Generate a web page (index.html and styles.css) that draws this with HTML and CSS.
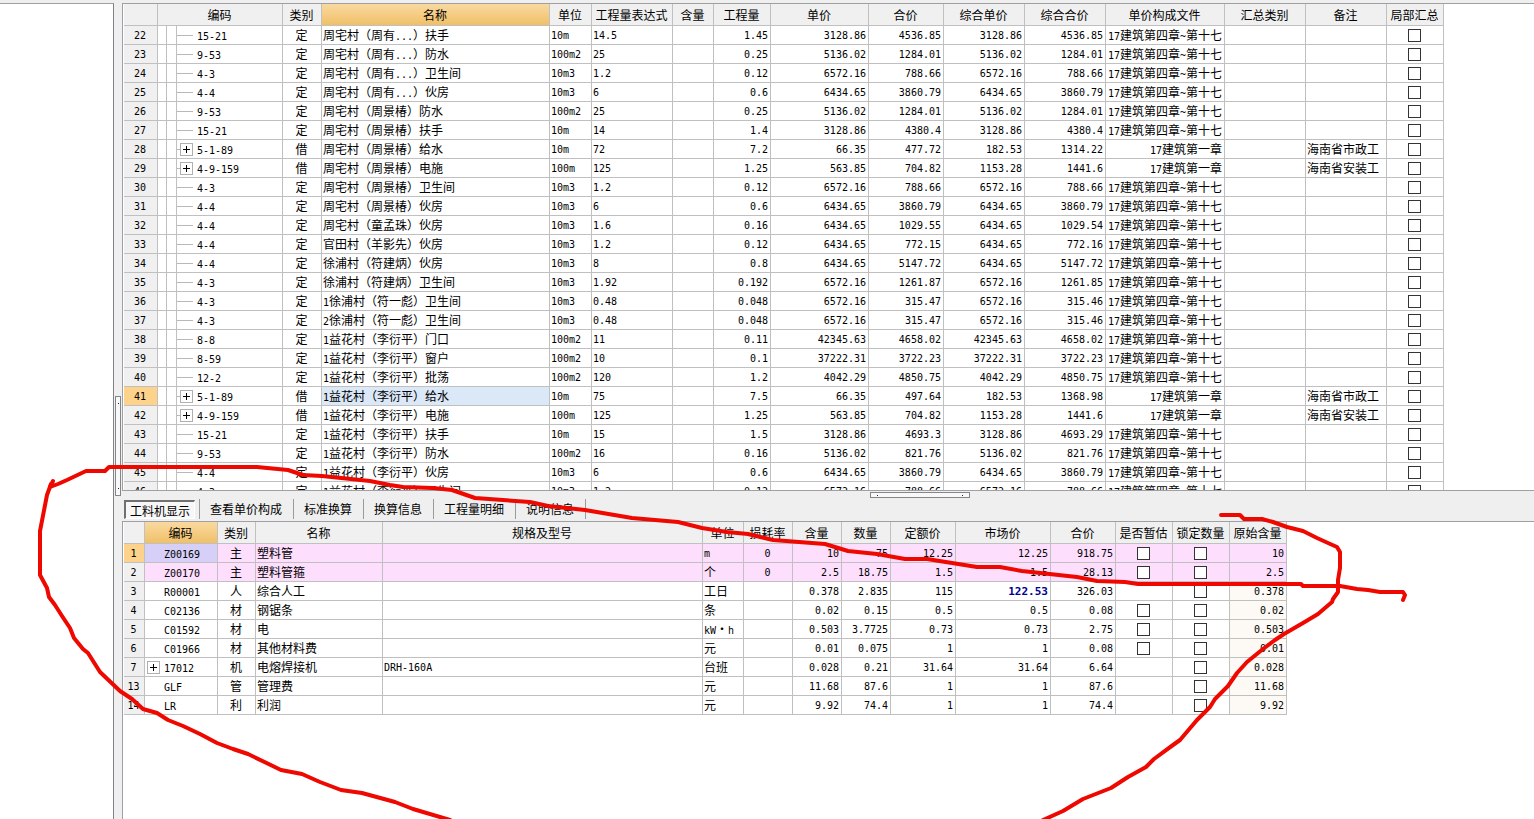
FILE: index.html
```html
<!DOCTYPE html>
<html lang="zh-CN">
<head>
<meta charset="utf-8">
<title>工料机显示</title>
<link rel="stylesheet" href="styles.css">
</head>
<body>
<div class="app">
  <aside class="side"></aside>
  <div class="vsplit">
    <div class="space-before"></div>
    <div class="vhandle"><i></i><i></i></div>
    <div class="space-after"></div>
  </div>
  <main class="main">
    <section class="panel upper">
      <table class="grid" id="items"></table>
    </section>
    <div class="hsplit"><div class="hhandle"><i></i><i></i></div></div>
    <nav class="tabs">
      <button class="tab active">工料机显示</button>
      <button class="tab">查看单价构成</button>
      <button class="tab">标准换算</button>
      <button class="tab">换算信息</button>
      <button class="tab">工程量明细</button>
      <button class="tab">说明信息</button>
    </nav>
    <section class="panel lower">
      <table class="grid" id="resources"></table>
    </section>
  </main>
</div>
<svg class="ink" width="1534" height="819" viewBox="0 0 1534 819" aria-hidden="true">
  <path d="M53 481L50 487L58 484L67 480L86 471L105 471L109 467H257L288 470L303 475L322 476L370 481L390 485L403 487L433 488L452 490L475 498L530 502L548 506L585 510L632 518L678 522L702 528L727 532L748 534L773 540L825 544L848 551L877 554L905 559L927 559L977 567L1000 567L1022 571L1077 577L1097 581L1125 582L1138 584H1301L1303 586L1340 586L1357 589L1368 590L1380 592H1403L1405 595L1403 600"/>
  <path d="M51 484L47 495L40 531V575L47 588L49 597L55 605L62 616L70 628L74 638L83 649L88 653L100 672L120 691L132 699L143 709L157 713L168 720L183 726L200 734L217 743L233 749L248 754L281 770L302 774L320 782L341 790L362 793L395 802L413 809L450 820"/>
  <path d="M1221 515H1240L1244 519H1262L1273 522L1287 527L1303 531L1317 538L1328 543L1337 547L1340 552V568L1338 580L1338 592L1333 599L1332 602L1318 614L1303 623L1284 634L1275 640L1263 649L1247 662L1237 673L1228 686L1215 699L1210 707L1197 720L1180 740L1173 745L1154 759L1146 767L1128 777L1111 788L1083 799L1063 811L1043 820"/>
</svg>
<script src="app.js"></script>
</body>
</html>
```

FILE: styles.css
```css
* { box-sizing: border-box; }

body {
  margin: 0;
  background: #efefef;
  color: #000;
  font: 12px "Noto Sans CJK SC", sans-serif;
  overflow: hidden;
}

.app {
  display: flex;
  height: 100vh;
}

.side {
  flex: none;
  width: 114px;
  margin-top: 3px;
  background: #fff;
  border-top: 1px solid #a0a0a0;
  border-right: 1px solid #808488;
}

.vsplit {
  flex: none;
  display: flex;
  flex-direction: column;
  align-items: center;
  width: 8px;
}
.space-before { flex: 396; }
.space-after { flex: 323; }

.vhandle,
.hhandle {
  display: flex;
  justify-content: space-between;
  border: 1px solid #83878b;
  background: #f8f8f8;
}
.vhandle {
  flex-direction: column;
  align-items: center;
  width: 6px;
  height: 100px;
  padding: 6px 0;
}
.hhandle {
  align-items: center;
  width: 100px;
  height: 6px;
  margin-left: 53%;
  padding: 0 6px;
}
.vhandle i,
.hhandle i {
  width: 1px;
  height: 1px;
  background: #222;
}

.main {
  flex: 1;
  min-width: 0;
  display: flex;
  flex-direction: column;
  padding-top: 3px;
}

.panel {
  overflow: hidden;
  padding-left: 1px;
  background: #fff;
  border: 1px solid #a0a0a4;
  border-right: 0;
}
.upper { flex: 488; min-height: 0; }
.lower { flex: 298; min-height: 0; border-bottom: 0; }

.hsplit {
  flex: none;
  height: 8px;
  padding-top: 1px;
}

.tabs {
  flex: none;
  display: flex;
  height: 22px;
  padding: 0 0 2px 2px;
}
.tab {
  padding: 0 11px 0 10px;
  border: 0;
  border-right: 1px solid #9a9a9a;
  background: none;
  color: #000;
  font: inherit;
  line-height: 18px;
}
.tab.active {
  margin: 1px 4px 0 0;
  padding: 0 4px;
  border: 1px solid #fff;
  border-top: 2px solid #707070;
  border-left: 2px solid #707070;
  background: #f7f7f7;
}
.tab.active + .tab { border-left: 1px solid #9a9a9a; }

.grid {
  table-layout: fixed;
  border-spacing: 0;
}
.grid th,
.grid td {
  overflow: hidden;
  padding: 0 2px 0 1px;
  border: 0 solid #c0c0c0;
  border-width: 0 1px 1px 0;
  line-height: 18px;
  text-align: left;
  white-space: nowrap;
  font-weight: normal;
}
.grid thead th {
  padding: 0 1px 0 0;
  background: #f0f0f0;
  line-height: 21px;
  text-align: center;
}
.grid thead th.current { background: linear-gradient(#f9d9a0, #f0c068); }
.grid tbody th {
  background: #f0f0f0;
  text-align: center;
}
.grid tbody th.current { background: #fdd28a; }

.grid .num { text-align: right; }
.grid .mid { text-align: center; }
.grid .tree-cell { padding: 0; }

.lat,
.grid .lat {
  font-family: "DejaVu Sans Mono", monospace;
  font-size: 10px;
}
.grid td.lat,
.grid tbody th.lat {
  padding-top: 2px;
  line-height: 16px;
}
span.lat { line-height: 0; }

.grid .selected { background: #dae8f7; }
.grid .main-material td { background: #fddffd; }
.grid .main-material td.picked { background: #d6d0f8; }
.grid .origin { background: #fdfaf5; }
.grid .edited {
  color: #000090;
  font-size: 11px;
  font-weight: bold;
}

.tree {
  display: flex;
  align-items: center;
  height: 18px;
}
.tree .lat { padding-top: 3px; }
.guide {
  width: 9px;
  height: 18px;
  border-right: 1px solid #c0c0c0;
}
.guide + .guide { width: 10px; }
.branch {
  width: 16px;
  height: 1px;
  margin-right: 4px;
  background: #b8b8b8;
}
.branch.stub {
  width: 3px;
  margin-right: 0;
}
.expand,
.no-expand {
  width: 13px;
  height: 13px;
  margin-right: 4px;
}
.expand {
  padding: 0;
  border: 1px solid #b0b0b0;
  background: #fff;
}
.expand svg { display: block; }
.flat { padding-left: 2px; }

.check {
  appearance: none;
  display: block;
  width: 13px;
  height: 13px;
  margin: 1px auto 0;
  border: 1px solid #333;
  background: #fff;
}

.ink {
  position: absolute;
  top: 0;
  left: 0;
  pointer-events: none;
  fill: none;
  stroke: #ee0800;
  stroke-width: 4;
  stroke-linecap: round;
  stroke-linejoin: round;
}
```

FILE: app.js
```js
const CHAPTERS = '17建筑第四章~第十七';
const items = `22|15-21|定|周宅村（周有...）扶手|10m|14.5|1.45|3128.86|4536.85|3128.86|4536.85
23|9-53|定|周宅村（周有...）防水|100m2|25|0.25|5136.02|1284.01|5136.02|1284.01
24|4-3|定|周宅村（周有...）卫生间|10m3|1.2|0.12|6572.16|788.66|6572.16|788.66
25|4-4|定|周宅村（周有...）伙房|10m3|6|0.6|6434.65|3860.79|6434.65|3860.79
26|9-53|定|周宅村（周景椿）防水|100m2|25|0.25|5136.02|1284.01|5136.02|1284.01
27|15-21|定|周宅村（周景椿）扶手|10m|14|1.4|3128.86|4380.4|3128.86|4380.4
28|5-1-89|借|周宅村（周景椿）给水|10m|72|7.2|66.35|477.72|182.53|1314.22|海南省市政工
29|4-9-159|借|周宅村（周景椿）电施|100m|125|1.25|563.85|704.82|1153.28|1441.6|海南省安装工
30|4-3|定|周宅村（周景椿）卫生间|10m3|1.2|0.12|6572.16|788.66|6572.16|788.66
31|4-4|定|周宅村（周景椿）伙房|10m3|6|0.6|6434.65|3860.79|6434.65|3860.79
32|4-4|定|周宅村（童孟珠）伙房|10m3|1.6|0.16|6434.65|1029.55|6434.65|1029.54
33|4-4|定|官田村（羊影先）伙房|10m3|1.2|0.12|6434.65|772.15|6434.65|772.16
34|4-4|定|徐浦村（符建炳）伙房|10m3|8|0.8|6434.65|5147.72|6434.65|5147.72
35|4-3|定|徐浦村（符建炳）卫生间|10m3|1.92|0.192|6572.16|1261.87|6572.16|1261.85
36|4-3|定|1徐浦村（符一彪）卫生间|10m3|0.48|0.048|6572.16|315.47|6572.16|315.46
37|4-3|定|2徐浦村（符一彪）卫生间|10m3|0.48|0.048|6572.16|315.47|6572.16|315.46
38|8-8|定|1益花村（李衍平）门口|100m2|11|0.11|42345.63|4658.02|42345.63|4658.02
39|8-59|定|1益花村（李衍平）窗户|100m2|10|0.1|37222.31|3722.23|37222.31|3722.23
40|12-2|定|1益花村（李衍平）批荡|100m2|120|1.2|4042.29|4850.75|4042.29|4850.75
41|5-1-89|借|1益花村（李衍平）给水|10m|75|7.5|66.35|497.64|182.53|1368.98|海南省市政工
42|4-9-159|借|1益花村（李衍平）电施|100m|125|1.25|563.85|704.82|1153.28|1441.6|海南省安装工
43|15-21|定|1益花村（李衍平）扶手|10m|15|1.5|3128.86|4693.3|3128.86|4693.29
44|9-53|定|1益花村（李衍平）防水|100m2|16|0.16|5136.02|821.76|5136.02|821.76
45|4-4|定|1益花村（李衍平）伙房|10m3|6|0.6|6434.65|3860.79|6434.65|3860.79
46|4-3|定|1益花村（李衍平）卫生间|10m3|1.2|0.12|6572.16|788.66|6572.16|788.66`;

// The last field says whether the first tick box is present.
const resources = `1|Z00169|主|塑料管||m|0|10|75|12.25|12.25|918.75|10|1
2|Z00170|主|塑料管箍||个|0|2.5|18.75|1.5|1.5|28.13|2.5|1
3|R00001|人|综合人工||工日||0.378|2.835|115|122.53|326.03|0.378|
4|C02136|材|钢锯条||条||0.02|0.15|0.5|0.5|0.08|0.02|1
5|C01592|材|电||kW·h||0.503|3.7725|0.73|0.73|2.75|0.503|1
6|C01966|材|其他材料费||元||0.01|0.075|1|1|0.08|0.01|1
7|17012|机|电熔焊接机|DRH-160A|台班||0.028|0.21|31.64|31.64|6.64|0.028|
13|GLF|管|管理费||元||11.68|87.6|1|1|87.6|11.68|
14|LR|利|利润||元||9.92|74.4|1|1|74.4|9.92|`;

const isLatin = s => /^[\x20-\x7e]+$/.test(s);

// A cell of plain Latin text takes the Latin face itself; mixed text gets runs.
function cell(text, cls = '', tag = 'td') {
  if (isLatin(text)) return `<${tag} class="lat ${cls}">${text}</${tag}>`;
  const html = text.replace(/[\x20-\x7e]+/g, '<span class="lat">$&</span>');
  return `<${tag} class="${cls}">${html}</${tag}>`;
}

const check = label => `<td><input class="check" type="checkbox" aria-label="${label}"></td>`;
const plus = '<button class="expand" aria-label="展开"><svg width="11" height="11" viewBox="0 0 11 11"><path d="M2 5.5H9M5.5 2V9" stroke="#000"/></svg></button>';

function head(widths, names, current) {
  return `<colgroup>${widths.map(w => `<col style="width:${w}px">`).join('')}</colgroup><thead><tr>` +
    names.map(n => `<th${n === current ? ' class="current"' : ''}>${n}</th>`).join('') + '</tr></thead>';
}

function fill(id, widths, names, current, rows) {
  const table = document.getElementById(id);
  table.style.width = widths.reduce((a, b) => a + b) + 'px';
  table.innerHTML = head(widths, names, current) + '<tbody>' + rows.join('') + '</tbody>';
}

fill('items',
  [34, 125, 39, 228, 42, 81, 41, 57, 98, 75, 81, 81, 119, 81, 81, 57],
  ['', '编码', '类别', '名称', '单位', '工程量表达式', '含量', '工程量', '单价', '合价', '综合单价', '综合合价', '单价构成文件', '汇总类别', '备注', '局部汇总'],
  '名称',
  items.split('\n').map(line => {
    const [no, code, kind, name, unit, expr, qty, price, total, cPrice, cTotal, note = ''] = line.split('|');
    const node = note ? '<span class="branch stub"></span>' + plus : '<span class="branch"></span>';
    const on = no === '41';
    return '<tr>' + cell(no, on ? 'current' : '', 'th') +
      `<td class="tree-cell"><div class="tree"><span class="guide"></span><span class="guide"></span>${node}<span class="lat">${code}</span></div></td>` +
      cell(kind, 'mid') + cell(name, on ? 'selected' : '') + cell(unit) + cell(expr) + '<td></td>' +
      [qty, price, total, cPrice, cTotal, note ? '17建筑第一章' : CHAPTERS].map(v => cell(v, 'num')).join('') +
      '<td></td>' + cell(note) + check('局部汇总 ' + no) + '</tr>';
  }));

fill('resources',
  [21, 73, 38, 127, 320, 41, 49, 49, 49, 65, 95, 65, 57, 57, 57],
  ['', '编码', '类别', '名称', '规格及型号', '单位', '损耗率', '含量', '数量', '定额价', '市场价', '合价', '是否暂估', '锁定数量', '原始含量'],
  '编码',
  resources.split('\n').map(line => {
    const [no, code, kind, name, spec, unit, loss, content, qty, quota, market, total, origin, estimate] = line.split('|');
    const box = no === '7' ? plus : '<span class="no-expand"></span>';
    return `<tr${kind === '主' ? ' class="main-material"' : ''}>` + cell(no, no === '1' ? 'current' : '', 'th') +
      `<td class="tree-cell${no === '1' ? ' picked' : ''}"><div class="tree flat">${box}<span class="lat">${code}</span></div></td>` +
      cell(kind, 'mid') + cell(name) + cell(spec) + cell(unit) + cell(loss, 'mid') +
      cell(content, 'num') + cell(qty, 'num') + cell(quota, 'num') +
      cell(market, market === '122.53' ? 'num edited' : 'num') + cell(total, 'num') +
      (estimate ? check('是否暂估 ' + no) : '<td></td>') + check('锁定数量 ' + no) +
      cell(origin, 'num origin') + '</tr>';
  }));
```
